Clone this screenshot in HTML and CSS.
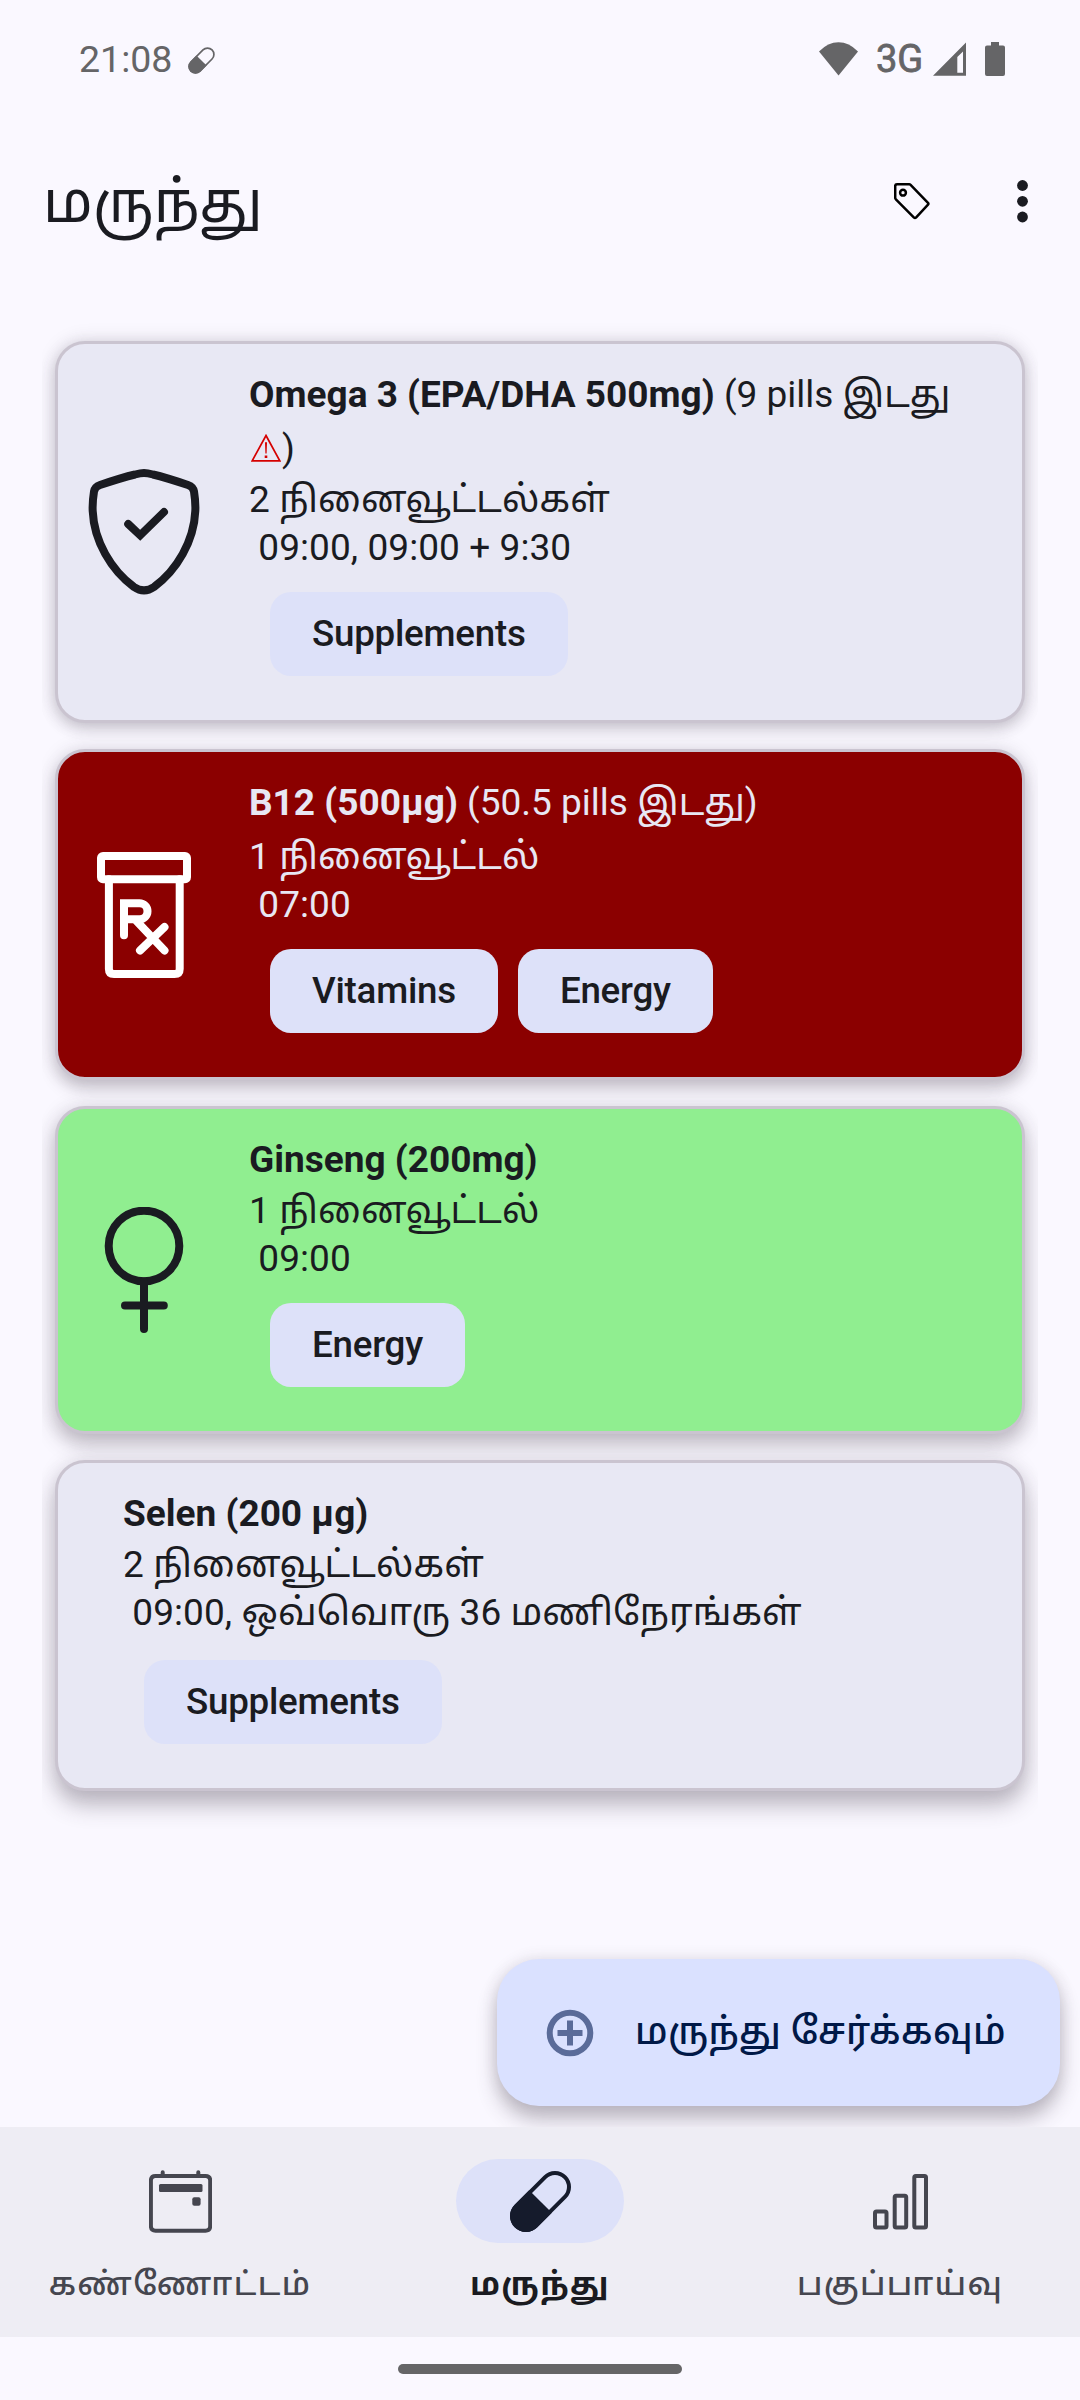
FILE: index.html
```html
<!DOCTYPE html>
<html lang="ta">
<head>
<meta charset="utf-8">
<title>மருந்து</title>
<link rel="stylesheet" href="styles.css">
</head>
<body>
<div class="screen">
  <div class="status">
    <span class="clock">21:08</span>
    <svg class="status-pill" viewBox="0 0 27 27"><g transform="rotate(45 13.5 13.5)"><rect x="7.1" y="-1.4" width="12.8" height="29.8" rx="6.4" fill="none" stroke="currentColor" stroke-width="1.7"/><path d="M6.3 13.5H20.7V22A7.2 7.2 0 0 1 6.3 22Z" fill="currentColor"/></g></svg>
    <svg class="wifi" viewBox="0 0 39 34"><path d="M0 9.5Q9 .3 19.5 .3T39 9.5L19.5 33.5Z" fill="currentColor"/></svg>
    <span class="net">3G</span>
    <svg class="signal" viewBox="0 0 33 34"><path fill-rule="evenodd" d="M33 .5V33.7H0ZM30 9.5L24.3 15V30.7H30Z" fill="currentColor"/></svg>
    <svg class="battery" viewBox="0 0 20 34"><path d="M6 0h8v3.5h4a2 2 0 0 1 2 2V32a2 2 0 0 1-2 2H2a2 2 0 0 1-2-2V5.500a2 2 0 0 1 2-2h4Z" fill="currentColor"/></svg>
  </div>

  <header class="appbar">
    <h1>மருந்து</h1>
    <svg class="tag" viewBox="0 0 36 37"><path d="M3 1.300H15.200Q16 1.300 16.600 1.900L34 19.800Q34.900 20.700 34 21.600L22 34.600Q21 35.500 20 34.600L1.900 16.300Q1.200 15.500 1.200 14.700V3Q1.200 1.300 3 1.300Z"/><circle cx="9" cy="9.700" r="2.900"/></svg>
    <svg class="more" viewBox="0 0 11 43"><circle cx="5.500" cy="5.500" r="5.400"/><circle cx="5.500" cy="21.300" r="5.400"/><circle cx="5.500" cy="37" r="5.400"/></svg>
  </header>

  <main class="list">
    <article class="card">
      <svg class="icon" viewBox="0 0 126 126"><path d="M63 4C60 4 57 4.700 54 5.500C41 8.600 30 12.300 19 16C15.500 17.200 13.600 19.200 13 22.500C11.800 30 11.400 36 11.700 42C13 72 30 101 53 118C60 122.800 66 122.800 73 118C96 101 113 72 114.300 42C114.600 36 114.200 30 113 22.500C112.400 19.200 110.500 17.200 107 16C96 12.300 85 8.600 72 5.500C69 4.700 66 4 63 4Z"/><path d="M47.200 55L59.200 66.300L83 43"/></svg>
      <div class="body">
        <p class="name"><b>Omega 3 (EPA/DHA 500mg)</b> (9 pills இடது<br><svg class="warn" viewBox="0 0 30 28"><path d="M15 1.500L28.800 26.800H1.200Z"/><path class="bang" d="M14 8.300h2l-.4 11.200h-1.200ZM13.700 21.500h2.600v2.600h-2.600Z"/></svg><span class="paren">)</span></p>
        <p>2 நினைவூட்டல்கள்</p>
        <p>&nbsp;09:00, 09:00 + 9:30</p>
        <div class="chips"><span class="chip">Supplements</span></div>
      </div>
    </article>

    <article class="card red">
      <svg class="icon" viewBox="0 0 126 126"><rect x="20" y="4" width="86" height="23.300" rx="2"/><path d="M27.900 27.300V117Q27.900 122 33 122H93.500Q98.700 122 98.700 117V27.300"/><path d="M43 83.300V51.300H58.500A8 8 0 0 1 58.500 67.300H43M55 68.500L83.500 98.500M83.500 75L59 98.500"/></svg>
      <div class="body">
        <p class="name tall"><b>B12 (500µg)</b> (50.5 pills இடது)</p>
        <p>1 நினைவூட்டல்</p>
        <p>&nbsp;07:00</p>
        <div class="chips"><span class="chip">Vitamins</span><span class="chip">Energy</span></div>
      </div>
    </article>

    <article class="card green">
      <svg class="icon" viewBox="0 0 126 126"><circle cx="63" cy="39" r="35.300"/><path d="M63 74.500V122M44 98.500H82.800"/></svg>
      <div class="body">
        <p class="name"><b>Ginseng (200mg)</b></p>
        <p>1 நினைவூட்டல்</p>
        <p>&nbsp;09:00</p>
        <div class="chips"><span class="chip">Energy</span></div>
      </div>
    </article>

    <article class="card plain">
      <div class="body">
        <p class="name"><b>Selen (200 µg)</b></p>
        <p>2 நினைவூட்டல்கள்</p>
        <p>&nbsp;09:00, ஒவ்வொரு 36 மணிநேரங்கள்</p>
        <div class="chips"><span class="chip">Supplements</span></div>
      </div>
    </article>
  </main>

  <div class="fab-row">
    <div class="fab">
      <svg viewBox="0 0 48 48"><circle cx="24" cy="24" r="20.300"/><path d="M24 11.500V36.500M11.500 24H36.500"/></svg>
      <span>மருந்து சேர்க்கவும்</span>
    </div>
  </div>

  <nav class="nav">
    <div class="tab">
      <div class="pad"><svg viewBox="0 0 63 63"><path fill="none" stroke="currentColor" stroke-width="4" d="M6.500 5.900H56.500Q61.200 5.900 61.200 10.600V56Q61.200 60.700 56.500 60.700H6.500Q1.900 60.700 1.900 56V10.600Q1.900 5.900 6.500 5.900Z"/><path stroke="currentColor" stroke-width="4" stroke-linecap="round" d="M13.700 2.300V6M49.300 2.300V6"/><rect x="10" y="14" width="43.500" height="8" rx="1.500" fill="currentColor"/><rect x="43.300" y="27.300" width="8.300" height="8.500" rx="2" fill="currentColor"/></svg></div>
      <span class="label">கண்ணோட்டம்</span>
    </div>
    <div class="tab active">
      <div class="pad"><svg viewBox="0 0 63 63"><g transform="rotate(45 31.500 31.500)"><rect x="17.500" y="-3" width="28" height="69" rx="14" fill="none" stroke="currentColor" stroke-width="4"/><path d="M15.500 31.500H47.500V52A16 16 0 0 1 15.500 52Z" fill="currentColor"/></g></svg></div>
      <span class="label">மருந்து</span>
    </div>
    <div class="tab">
      <div class="pad"><svg viewBox="0 0 63 63"><g fill="none" stroke="currentColor" stroke-width="4"><rect x="6" y="41.500" width="11.500" height="16" rx="1.500"/><rect x="25.700" y="25.700" width="11.500" height="31.800" rx="1.500"/><rect x="45.300" y="6" width="11.700" height="51.500" rx="1.500"/></g></svg></div>
      <span class="label">பகுப்பாய்வு</span>
    </div>
  </nav>
  <div class="gesture"><i></i></div>
</div>
</body>
</html>
```
FILE: styles.css
```css
* { box-sizing: border-box; }
body {
  margin: 0;
  background: #faf8ff;
  font-family: Roboto, "Noto Sans Tamil", "Noto Sans", sans-serif;
  color: #1a1b21;
}
h1, p { margin: 0; font-weight: 400; }
svg { display: block; flex: none; }
.screen {
  width: 1080px;
  height: 2400px;
  display: flex;
  flex-direction: column;
  overflow: hidden;
}

.status {
  flex: none;
  height: 118px;
  padding: 0 75px 0 79px;
  display: flex;
  align-items: center;
  color: #656567;
}
.clock { font-size: 37.500px; width: 109px; }
.status-pill { width: 27px; height: 27px; margin-top: 3px; }
.wifi { width: 39px; height: 34px; margin-left: auto; }
.net { font-size: 38px; -webkit-text-stroke: .8px; width: 57px; margin-left: 18px; }
.signal { width: 33px; height: 34px; }
.battery { width: 20px; height: 34px; margin-left: 19px; }

.appbar {
  flex: none;
  height: 166px;
  padding: 0 52px 0 43px;
  display: flex;
  align-items: center;
}
.appbar h1 { font-size: 58px; line-height: 78px; flex: 1; padding-top: 1px; }
.tag { width: 36px; height: 37px; margin-right: 87px; fill: none; stroke: #000; stroke-width: 2.500; }
.more { width: 11px; height: 43px; fill: #1a1b21; }

.list {
  flex: none;
  width: 996px;
  height: 1593px;
  margin: 0 42px;
  padding: 57px 13px 0;
  display: flex;
  flex-direction: column;
  gap: 26px;
  overflow: hidden;
}
.card {
  display: flex;
  align-items: center;
  padding: 24px 20px 44px 23px;
  border: 3px solid #cac4d0;
  border-radius: 30px;
  background: #e8e8f4;
  box-shadow: 0 5px 15px rgba(60, 50, 65, .24), 0 0 20px rgba(60, 50, 65, .12);
}
.card.red {
  background: #8b0000;
  color: #e8e7f3;
  box-shadow: 0 8px 16px rgba(60, 50, 65, .26), 0 0 20px rgba(60, 50, 65, .12);
}
.card.green {
  background: #90ee90;
  box-shadow: 0 11px 20px rgba(60, 50, 65, .28), 0 0 20px rgba(60, 50, 65, .12);
}
.card.plain { box-shadow: 0 15px 22px rgba(60, 50, 65, .3), 0 0 20px rgba(60, 50, 65, .12); }
.icon {
  width: 126px;
  height: 126px;
  margin-right: 42px;
  margin-bottom: -20px;
  fill: none;
  stroke: #1a1b21;
  stroke-width: 8;
  stroke-linecap: round;
}
.red .icon { stroke: #fff; }
.plain .body { margin-left: 42px; }
.plain .chips { margin-top: 23px; }
.body { font-size: 37px; white-space: nowrap; }
.body p { line-height: 48px; }
.body .name { line-height: 54px; }
.body .tall { margin-bottom: 3px; }
.body b { font-weight: 700; }
.body p:not(.name) { letter-spacing: .08px; }
.warn { display: inline-block; width: 30px; height: 28px; margin: 0 1px 0 2px; vertical-align: -1px; fill: none; stroke: #d50000; stroke-width: 1.700; }
.warn .bang { fill: #d50000; stroke: none; }
.chips { display: flex; gap: 20px; margin: 20px 0 0 21px; }
.chip {
  height: 84px;
  padding: 0 42px;
  border-radius: 21px;
  background: #dde1f9;
  color: #1a1b21;
  font-size: 36.750px;
  font-weight: 500;
  letter-spacing: -.25px;
  line-height: 83px;
}

.fab-row {
  flex: 1;
  padding: 82px 20px 0 0;
  display: flex;
  justify-content: flex-end;
  align-items: flex-start;
}
.fab {
  width: 563px;
  height: 147px;
  padding-left: 49px;
  border-radius: 42px;
  background: #dae1ff;
  color: #001847;
  box-shadow: 0 14px 20px rgba(60, 50, 65, .3), 0 0 16px rgba(60, 50, 65, .12);
  display: flex;
  align-items: center;
  font-size: 37px;
  font-weight: 500;
  letter-spacing: .36px;
  white-space: nowrap;
}
.fab svg { width: 48px; height: 48px; margin-right: 41px; fill: none; stroke: #5a6b99; stroke-width: 6; }
.fab span { padding-top: 2px; }

.nav {
  flex: none;
  position: relative;
  height: 210px;
  background: #eeedf4;
  display: grid;
  grid-template-columns: repeat(3, 1fr);
}
.tab { padding-top: 32px; display: flex; flex-direction: column; align-items: center; color: #45464f; }
.pad { width: 168px; height: 84px; border-radius: 42px; display: flex; align-items: center; justify-content: center; }
.pad svg { width: 63px; height: 63px; }
.active { color: #1a1b21; }
.active .pad { background: #dde1f9; color: #151b2c; }
.label { font-size: 32px; font-weight: 500; line-height: 42px; margin-top: 20px; letter-spacing: 1.350px; }
.active .label { font-weight: 700; }

.gesture { flex: none; height: 63px; padding-top: 27px; display: flex; justify-content: center; }
.gesture i { width: 284px; height: 10px; border-radius: 5px; background: #656567; }
```
